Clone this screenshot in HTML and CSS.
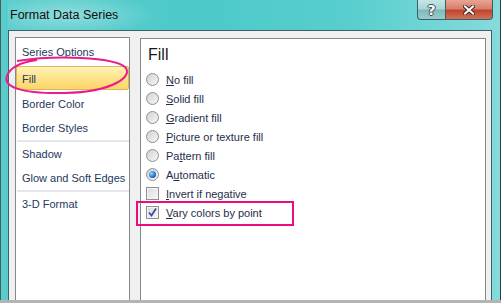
FILE: index.html
```html
<html>
    <head>
        <link rel="stylesheet" href="styles.css">
    </head>
    <body>
        <div class="window">
            <div class="titlebar">
                <span class="title">Format Data Series</span>
                <div class="caption-buttons">
                    <div class="cap-btn help">?</div>
                    <div class="cap-btn close">
                        <svg width="12" height="10" viewBox="0 0 12 10">
                            <path d="M2 1.5 L10 8.5 M10 1.5 L2 8.5" stroke="#4a2a22" stroke-width="4" stroke-linecap="square"/>
                            <path d="M2 1.5 L10 8.5 M10 1.5 L2 8.5" stroke="#ffffff" stroke-width="2" stroke-linecap="square"/>
                        </svg>
                    </div>
                </div>
            </div>

            <div class="client">
                <ul class="nav">
                    <li>Series Options</li>
                    <li class="active">Fill</li>
                    <li>Border Color</li>
                    <li>Border Styles</li>
                    <li class="sep"></li>
                    <li>Shadow</li>
                    <li>Glow and Soft Edges</li>
                    <li class="sep"></li>
                    <li>3-D Format</li>
                </ul>

                <div class="panel">
                    <div class="heading">Fill</div>
                    <div class="option"><span class="radio"></span><span><u>N</u>o fill</span></div>
                    <div class="option"><span class="radio"></span><span><u>S</u>olid fill</span></div>
                    <div class="option"><span class="radio"></span><span><u>G</u>radient fill</span></div>
                    <div class="option"><span class="radio"></span><span><u>P</u>icture or texture fill</span></div>
                    <div class="option"><span class="radio"></span><span>Pa<u>t</u>tern fill</span></div>
                    <div class="option"><span class="radio checked"></span><span>A<u>u</u>tomatic</span></div>
                    <div class="option"><span class="checkbox"></span><span><u>I</u>nvert if negative</span></div>
                    <div class="option marked">
                        <span class="checkbox">
                            <svg width="11" height="11" viewBox="0 0 11 11">
                                <path d="M2 5.5 L4.5 8.5 L9 1.5" fill="none" stroke="#3f4aa6" stroke-width="1.8"/>
                            </svg>
                        </span>
                        <span><u>V</u>ary colors by point</span>
                    </div>
                </div>
            </div>

            <!-- hand drawn circle round the Fill item -->
            <svg class="circle-mark" width="135" height="45" viewBox="0 0 135 45">
                <path d="M16 6 C 55 0, 112 2, 124 12 C 133 21, 112 37, 64 38 C 18 39, 2 31, 6 21 C 9 12, 22 7, 36 5"
                      fill="none" stroke="#ea1c8c" stroke-width="2"/>
            </svg>
        </div>
    </body>
</html>
```

FILE: styles.css
```css
body {
    margin: 0;
    background-color: #b4b4b4;
    font: 11px "Liberation Sans", Arial, sans-serif;
}

.window {
    position: relative;
    box-sizing: border-box;
    width: 501px;
    height: 300px;
    display: flex;
    flex-direction: column;
    padding: 0 8px 0 7px;
    border-left: 1px solid #4a5c5c;
    border-right: 1px solid #2c3c3c;
    background: linear-gradient(to right, #58cccc 0%, #4dc9c9 40%, #58cece 70%, #86dbdb 100%);
}

.titlebar {
    height: 30px;
    display: flex;
    justify-content: space-between;
    align-items: flex-start;
    background: radial-gradient(ellipse 90px 22px at 60px 15px, rgba(255,255,255,0.35), rgba(255,255,255,0));
}

.title {
    padding: 8px 0 0 2px;
    font-size: 12.5px;
    color: #111;
}

.caption-buttons {
    display: flex;
    margin-right: -1px;
}

.cap-btn {
    height: 19px;
    display: flex;
    align-items: center;
    justify-content: center;
    border: 1px solid #3b5e66;
    border-top: none;
}

.help {
    width: 27px;
    border-right: none;
    border-bottom-left-radius: 4px;
    background: linear-gradient(#c4e6e6 0%, #a9d6d6 45%, #7fbaba 55%, #9ccccc 100%);
    color: #fff;
    font: bold 14px "DejaVu Sans", sans-serif;
    text-shadow: 1px 0 #3a4a4a, -1px 0 #3a4a4a, 0 1px #3a4a4a, 0 -1px #3a4a4a;
}

.close {
    width: 46px;
    border-bottom-right-radius: 4px;
    background: linear-gradient(#e7a594 0%, #d7806a 45%, #c0452c 55%, #d0735a 100%);
}

.client {
    flex: 1;
    display: flex;
    gap: 10px;
    padding: 6px 5px 0 6px;
    overflow: hidden;
    border: 1px solid #3f6166;
    border-bottom: none;
    background-color: #f0f0f0;
}

.nav {
    box-sizing: border-box;
    width: 115px;
    height: 290px;
    margin: 0;
    padding: 2px 0 0 0;
    list-style: none;
    border: 1px solid #828790;
    background-color: #fff;
    color: #1e395b;
}

.nav li {
    height: 24px;
    line-height: 24px;
    padding-left: 6px;
    white-space: nowrap;
}

.nav li.active {
    box-sizing: border-box;
    margin: 2px 0;
    padding-left: 5px;
    border: 1px solid #dcb45a;
    border-radius: 2px;
    background: linear-gradient(#fff3b8 0%, #fde38a 50%, #fdd668 100%);
}

.nav li.sep {
    height: 2px;
    margin-left: 1px;
    padding: 0;
    background-color: #e6e6ee;
}

.panel {
    flex: 1;
    height: 290px;
    margin-top: 1px;
    padding: 6px 0 0 0;
    border: 1px solid #828790;
    background-color: #fff;
    color: #1e2e48;
}

.heading {
    height: 20px;
    line-height: 20px;
    margin-bottom: 5px;
    padding-left: 7px;
    font-size: 16px;
    color: #1a1a1a;
}

.option {
    position: relative;
    height: 19px;
    display: flex;
    align-items: center;
}

.radio, .checkbox {
    box-sizing: border-box;
    width: 13px;
    height: 13px;
    margin: 0 7px 0 5px;
    display: flex;
    align-items: center;
    justify-content: center;
    border: 1px solid #8f8f8f;
    background: linear-gradient(135deg, #d2d2d2, #f6f6f6);
}

.radio {
    border-radius: 50%;
}

.radio.checked::after {
    content: "";
    width: 7px;
    height: 7px;
    border-radius: 50%;
    background: radial-gradient(circle at 35% 35%, #9fd4ff, #1a6ed0 60%, #0b3a7a);
}

.checkbox {
    background: linear-gradient(135deg, #dadada, #f8f8f8);
    box-shadow: inset 0 0 0 1px #f4f4f4;
}

.option.marked::after {
    content: "";
    position: absolute;
    left: -5px;
    top: -2px;
    width: 158px;
    height: 25px;
    box-sizing: border-box;
    border: 2px solid #ec0c7c;
}

.circle-mark {
    position: absolute;
    left: 0;
    top: 55px;
}
```
